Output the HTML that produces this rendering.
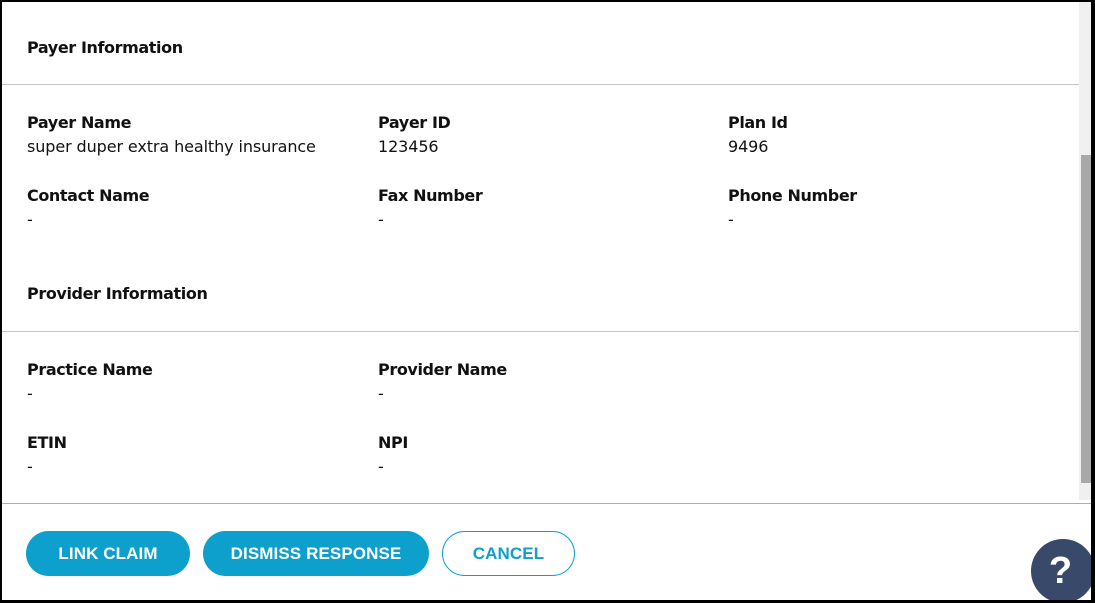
<!DOCTYPE html>
<html><head><style>
body{margin:0;width:1095px;height:603px;overflow:hidden;background:#000;font-family:"Liberation Sans",sans-serif;color:#111}
.page{position:absolute;left:2px;top:2px;width:1089px;height:598px;background:#fff;overflow:hidden}
.t{position:absolute;font-family:"DejaVu Sans",sans-serif;font-size:16px;white-space:nowrap;letter-spacing:-0.1px}
.b{font-weight:bold;letter-spacing:-0.4px}
.hr{position:absolute;left:0;width:1077px;height:1px;background:#c4c4c4}
.btn{position:absolute;top:529px;height:45px;border-radius:23px;background:#0ea0cc;color:#fff;font-weight:bold;font-size:17px;display:flex;align-items:center;justify-content:center;box-sizing:border-box;letter-spacing:0.1px}
</style></head><body><div class="page">
<div class="t b" style="left:25px;top:36px">Payer Information</div>
<div class="hr" style="top:82px"></div>
<div class="t b" style="left:25px;top:111px">Payer Name</div>
<div class="t" style="left:25px;top:135px">super duper extra healthy insurance</div>
<div class="t b" style="left:376px;top:111px">Payer ID</div>
<div class="t" style="left:376px;top:135px">123456</div>
<div class="t b" style="left:726px;top:111px">Plan Id</div>
<div class="t" style="left:726px;top:135px">9496</div>
<div class="t b" style="left:25px;top:184px">Contact Name</div>
<div class="t" style="left:25px;top:208px">-</div>
<div class="t b" style="left:376px;top:184px">Fax Number</div>
<div class="t" style="left:376px;top:208px">-</div>
<div class="t b" style="left:726px;top:184px">Phone Number</div>
<div class="t" style="left:726px;top:208px">-</div>
<div class="t b" style="left:25px;top:282px">Provider Information</div>
<div class="hr" style="top:329px"></div>
<div class="t b" style="left:25px;top:358px">Practice Name</div>
<div class="t" style="left:25px;top:382px">-</div>
<div class="t b" style="left:376px;top:358px">Provider Name</div>
<div class="t" style="left:376px;top:382px">-</div>
<div class="t b" style="left:25px;top:431px">ETIN</div>
<div class="t" style="left:25px;top:455px">-</div>
<div class="t b" style="left:376px;top:431px">NPI</div>
<div class="t" style="left:376px;top:455px">-</div>
<div style="position:absolute;left:1077px;top:0;width:12px;height:498px;background:#f0f0f0"></div>
<div style="position:absolute;left:1079px;top:153px;width:10px;height:328px;background:#a8a8a8"></div>
<div style="position:absolute;left:0;top:501px;width:1089px;height:1px;background:#8ab8cc"></div>
<div class="btn" style="left:24px;width:164px">LINK CLAIM</div>
<div class="btn" style="left:201px;width:226px">DISMISS RESPONSE</div>
<div class="btn" style="left:440px;width:133px;background:#fff;color:#0ea0cc;border:1px solid #0ea0cc">CANCEL</div>
<div style="position:absolute;left:1029px;top:537px;width:64px;height:64px;border-radius:50%;background:#39496a;color:#fff;font-weight:bold;font-size:38px;line-height:64px;text-align:center;text-indent:-5px">?</div>
</div></body></html>
